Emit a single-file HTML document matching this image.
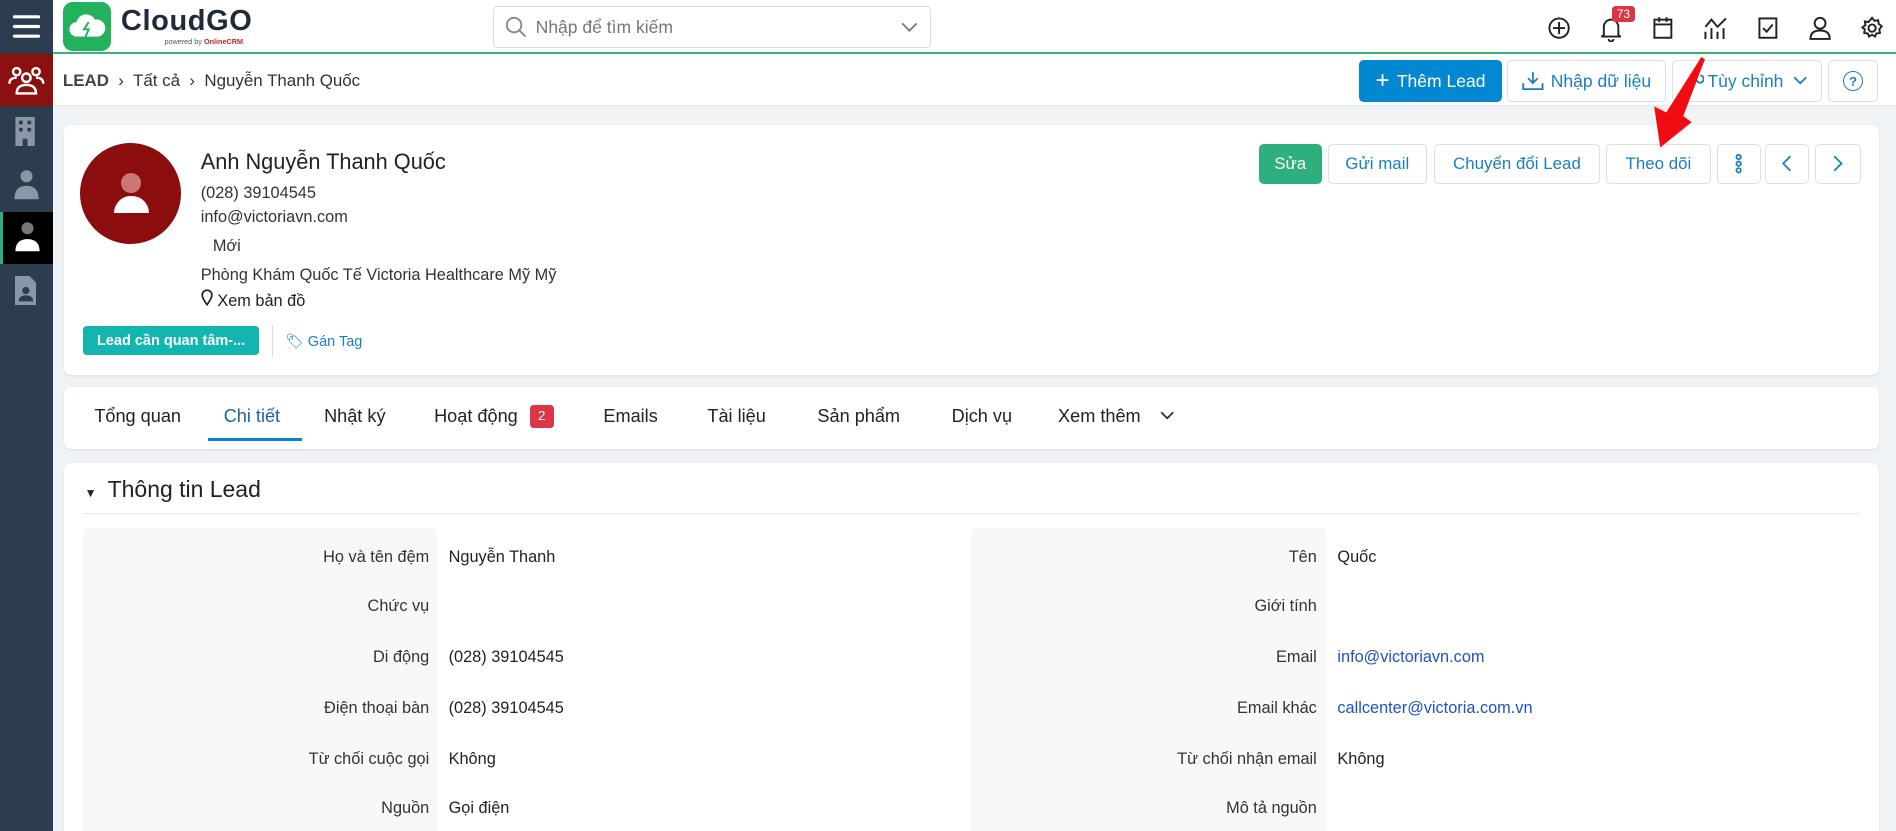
<!DOCTYPE html>
<html><head><meta charset="utf-8"><style>
html{zoom:1.2092;overflow:hidden;background:#f0f3f6}
*{box-sizing:border-box;margin:0;padding:0}
body{width:1568px;height:687px;overflow:hidden;background:#f0f3f6;font-family:"Liberation Sans","Noto Sans CJK SC",sans-serif;color:#222;font-size:13.5px;position:relative}
.abs{position:absolute}
.side{left:0;top:0;width:44px;height:687px;background:#2c3d4f}
.top{left:44px;top:0;width:1524px;height:45px;background:#fff;border-bottom:2px solid #3cb371}
.bc{left:44px;top:45px;width:1524px;height:43px;background:#fff;border-bottom:1px solid #e3e6ea}
.btn{position:absolute;border:1px solid #dcdfe4;border-radius:4px;background:#fff;color:#1a7fc1;font-size:14px;display:flex;align-items:center;justify-content:center;white-space:nowrap}
.card{position:absolute;background:#fff;border-radius:6px;box-shadow:0 1px 2px rgba(0,0,0,.08)}
.tab{position:absolute;top:336px;font-size:15px;color:#222}
.lab{position:absolute;text-align:right;color:#333;font-size:13.5px}
.val{position:absolute;font-size:13.5px;color:#222}
.ic{position:absolute;top:13px}
</style></head><body>
<div class="abs side"></div>
<svg class="abs" style="left:10px;top:10px" width="24" height="24" viewBox="0 0 24 24" stroke="#fff" stroke-width="2.6" stroke-linecap="round"><path d="M2 4h20M2 12h20M2 20h20"/></svg>
<div class="abs" style="left:0;top:45px;width:44px;height:43px;background:#8b1010"></div>
<svg class="abs" style="left:6px;top:51px" width="32" height="32" viewBox="0 0 32 32" fill="none" stroke="#fff" stroke-width="2"><circle cx="8" cy="8" r="3"/><circle cx="24" cy="8" r="3"/><circle cx="16" cy="13" r="3.5"/><path d="M2 18c0-4 3-5 6-5M30 18c0-4-3-5-6-5M8 26c0-5 3-7 8-7s8 2 8 7z"/></svg>
<svg class="abs" style="left:11px;top:97px" width="20" height="24" viewBox="0 0 20 24" fill="#8a97a5"><rect x="2" y="0" width="16" height="24"/><g fill="#2c3d4f"><rect x="5" y="3" width="3" height="3"/><rect x="12" y="3" width="3" height="3"/><rect x="5" y="9" width="3" height="3"/><rect x="12" y="9" width="3" height="3"/><rect x="8" y="18" width="4" height="6"/></g></svg>
<svg class="abs" style="left:10px;top:140px" width="24" height="26" viewBox="0 0 24 26" fill="#8a97a5"><circle cx="12" cy="6" r="5"/><path d="M2 25c0-8 4-11 10-11s10 3 10 11z"/></svg>
<div class="abs" style="left:0;top:175px;width:44px;height:43px;background:#000;border-left:3px solid #2eaf7d"></div>
<svg class="abs" style="left:11px;top:183px" width="24" height="26" viewBox="0 0 24 26"><circle cx="12" cy="6" r="5" fill="#777"/><path d="M2 25c0-7 4-10 10-10s10 3 10 10z" fill="#fff"/></svg>
<svg class="abs" style="left:12px;top:228px" width="18" height="24" viewBox="0 0 18 24" fill="#8a97a5"><path d="M0 0h12l6 6v18H0z"/><circle cx="9" cy="12" r="3" fill="#2c3d4f"/><path d="M3 21c0-4 3-5 6-5s6 1 6 5z" fill="#2c3d4f"/></svg>

<div class="abs top"></div>
<div class="abs" style="left:52px;top:2px;width:40px;height:40px;background:#22b15c;border-radius:8px"></div>
<svg class="abs" style="left:55px;top:8px" width="34" height="28" viewBox="0 0 34 28"><path d="M8 22a6 6 0 0 1 0-12 8 8 0 0 1 15-2 6 6 0 0 1 3 14z" fill="#fff"/><path d="M18 10l-4 6h4l-3 7" stroke="#22b15c" stroke-width="1.6" fill="none"/></svg>
<div class="abs" style="left:100px;top:4px;font-size:24px;font-weight:bold;color:#1f2a3a;letter-spacing:.5px">CloudGO</div>
<div class="abs" style="left:136px;top:31px;font-size:6px;color:#555">powered by <b style="color:#c0262d">OnlineCRM</b></div>
<div class="abs" style="left:408px;top:5px;width:362px;height:35px;border:1px solid #d8dce1;border-radius:4px"></div>
<svg class="abs" style="left:418px;top:13px" width="18" height="18" viewBox="0 0 18 18" fill="none" stroke="#888" stroke-width="1.5"><circle cx="7.5" cy="7.5" r="6"/><path d="M12 12l5 5"/></svg>
<div class="abs" style="left:443px;top:14px;font-size:14.5px;color:#777">Nhập để tìm kiếm</div>
<svg class="abs" style="left:745px;top:17px" width="14" height="10" viewBox="0 0 14 10" fill="none" stroke="#777" stroke-width="1.5"><path d="M1 2l6 6 6-6"/></svg>
<svg class="ic" style="left:1279px" width="20" height="20" viewBox="0 0 20 20" fill="none" stroke="#222" stroke-width="1.6"><circle cx="10" cy="10" r="8"/><path d="M10 5v10M5 10h10"/></svg>
<svg class="ic" style="left:1322px" width="20" height="22" viewBox="0 0 20 22" fill="none" stroke="#222" stroke-width="1.6"><path d="M4 16V9a6 6 0 0 1 12 0v7l2 1H2zM8 19a2 2 0 0 0 4 0"/></svg>
<div class="abs" style="left:1333px;top:5px;background:#dc3545;color:#fff;font-size:10px;padding:1px 4px;border-radius:3px">73</div>
<svg class="ic" style="left:1366px" width="18" height="20" viewBox="0 0 18 20" fill="none" stroke="#222" stroke-width="1.6"><rect x="2" y="3" width="14" height="15"/><path d="M2 7h14M6 1v4M12 1v4"/></svg>
<svg class="ic" style="left:1408px" width="22" height="20" viewBox="0 0 22 20" fill="none" stroke="#222" stroke-width="1.6"><path d="M2 19v-6M7 19v-9M12 19v-6M17 19v-9M2 9l5-6 5 6 7-7"/></svg>
<svg class="ic" style="left:1453px" width="18" height="20" viewBox="0 0 18 20" fill="none" stroke="#222" stroke-width="1.6"><rect x="2" y="2" width="14" height="16"/><path d="M5 10l3 3 5-6"/></svg>
<svg class="ic" style="left:1495px" width="20" height="20" viewBox="0 0 20 20" fill="none" stroke="#222" stroke-width="1.6"><circle cx="10" cy="6" r="4.5"/><path d="M2 19c0-5 3-7 8-7s8 2 8 7z"/></svg>
<svg class="ic" style="left:1538px" width="20" height="20" viewBox="0 0 20 20" fill="none" stroke="#222" stroke-width="1.6"><circle cx="10" cy="10" r="3"/><path d="M10 1.5l2 2.5 3-.5.5 3 2.5 2-2 2.5.5 3-3 .5-1 2.5-2.5-1.5-2.5 1.5-1-2.5-3-.5.5-3L2 9.5 4.5 7.5 4 4.5l3 .5z"/></svg>

<div class="abs bc"></div>
<div class="abs" style="left:52px;top:59px;font-size:14px;color:#333"><span style="font-weight:bold;color:#3d4550">LEAD</span> &nbsp;›&nbsp; Tất cả &nbsp;›&nbsp; Nguyễn Thanh Quốc</div>
<div class="btn" style="left:1124px;top:50px;width:118px;height:34px;background:#0288d1;border-color:#0288d1;color:#fff;font-size:14.5px"><span style="font-size:20px;margin-right:6px">+</span>Thêm Lead</div>
<div class="btn" style="left:1246px;top:50px;width:132px;height:34px;font-size:14.5px"><svg width="18" height="16" viewBox="0 0 18 16" fill="none" stroke="#1a7fc1" stroke-width="1.5" style="margin-right:6px"><path d="M9 1v9M5 6l4 4 4-4M1 10v5h16v-5"/></svg>Nhập dữ liệu</div>
<div class="btn" style="left:1383px;top:50px;width:124px;height:34px;font-size:14.5px"><svg width="14" height="14" viewBox="0 0 14 14" fill="none" stroke="#1a7fc1" stroke-width="1.6" style="margin-right:3px"><path d="M2 12l6-6M8 6a3 3 0 1 0 3-4"/></svg>Tùy chỉnh<svg width="12" height="8" viewBox="0 0 12 8" fill="none" stroke="#1a7fc1" stroke-width="1.5" style="margin-left:8px"><path d="M1 1l5 5 5-5"/></svg></div>
<div class="btn" style="left:1512px;top:50px;width:41px;height:34px"><span style="border:1.6px solid #1a7fc1;border-radius:50%;width:17px;height:17px;font-size:11px;display:flex;align-items:center;justify-content:center;font-weight:bold">?</span></div>

<div class="card" style="left:53px;top:103px;width:1501px;height:207px"></div>
<div class="abs" style="left:66px;top:118px;width:84px;height:84px;border-radius:50%;background:#8b0d0d"></div>
<div class="abs" style="left:100px;top:143px;width:17px;height:17px;border-radius:50%;background:#c77"></div>
<div class="abs" style="left:94px;top:162px;width:29px;height:14px;border-radius:14px 14px 0 0;background:#fff"></div>
<div class="abs" style="left:166px;top:123px;font-size:18px;color:#222">Anh Nguyễn Thanh Quốc</div>
<div class="abs" style="left:166px;top:152px;color:#333">(028) 39104545</div>
<div class="abs" style="left:166px;top:172px;color:#333">info@victoriavn.com</div>
<div class="abs" style="left:176px;top:196px;color:#333">Mới</div>
<div class="abs" style="left:166px;top:220px;color:#333">Phòng Khám Quốc Tế Victoria Healthcare Mỹ Mỹ</div>
<div class="abs" style="left:166px;top:239px;color:#222"><svg width="10" height="14" viewBox="0 0 10 14" fill="none" stroke="#222" stroke-width="1.4"><path d="M5 13C2 9 1 7 1 5a4 4 0 0 1 8 0c0 2-1 4-4 8z"/></svg> Xem bản đồ</div>
<div class="abs" style="left:69px;top:270px;width:145px;height:24px;background:#13b5b1;border-radius:3px;color:#fff;font-size:12px;font-weight:bold;display:flex;align-items:center;justify-content:center">Lead cần quan tâm-...</div>
<div class="abs" style="left:225px;top:269px;width:1px;height:26px;background:#ddd"></div>
<div class="abs" style="left:236px;top:275px;font-size:12px;color:#1a7fc1">🏷 Gán Tag</div>
<div class="btn" style="left:1041px;top:119px;width:52px;height:33px;background:#2eaf7d;border-color:#2eaf7d;color:#fff">Sửa</div>
<div class="btn" style="left:1098px;top:119px;width:82px;height:33px">Gửi mail</div>
<div class="btn" style="left:1186px;top:119px;width:137px;height:33px">Chuyển đổi Lead</div>
<div class="btn" style="left:1328px;top:119px;width:87px;height:33px">Theo dõi</div>
<div class="btn" style="left:1420px;top:119px;width:36px;height:33px"><svg width="6" height="16" viewBox="0 0 6 16" fill="none" stroke="#1a7fc1" stroke-width="1.5"><circle cx="3" cy="2.5" r="1.8"/><circle cx="3" cy="8" r="1.8"/><circle cx="3" cy="13.5" r="1.8"/></svg></div>
<div class="btn" style="left:1460px;top:119px;width:36px;height:33px"><svg width="8" height="14" viewBox="0 0 8 14" fill="none" stroke="#1a7fc1" stroke-width="1.5"><path d="M7 1L1 7l6 6"/></svg></div>
<div class="btn" style="left:1501px;top:119px;width:38px;height:33px"><svg width="8" height="14" viewBox="0 0 8 14" fill="none" stroke="#1a7fc1" stroke-width="1.5"><path d="M1 1l6 6-6 6"/></svg></div>
<svg class="abs" style="left:0;top:0" width="1568" height="200"><path d="M1407 47L1410 49 1392 96 1399 101 1373 122 1368 88 1378 93z" fill="#f00c12"/></svg>

<div class="card" style="left:53px;top:320px;width:1501px;height:51px"></div>
<div class="tab" style="left:78px">Tổng quan</div>
<div class="tab" style="left:185px;color:#1565a8">Chi tiết</div>
<div class="abs" style="left:172px;top:362px;width:78px;height:3px;background:#0288d1"></div>
<div class="tab" style="left:268px">Nhật ký</div>
<div class="tab" style="left:359px">Hoạt động</div>
<div class="abs" style="left:438px;top:335px;width:20px;height:19px;background:#dc3545;border-radius:3px;color:#fff;font-size:11px;text-align:center;line-height:19px">2</div>
<div class="tab" style="left:499px">Emails</div>
<div class="tab" style="left:585px">Tài liệu</div>
<div class="tab" style="left:676px">Sản phẩm</div>
<div class="tab" style="left:787px">Dịch vụ</div>
<div class="tab" style="left:875px">Xem thêm</div>
<svg class="abs" style="left:959px;top:340px" width="12" height="8" viewBox="0 0 12 8" fill="none" stroke="#333" stroke-width="1.5"><path d="M1 1l5 5 5-5"/></svg>

<div class="card" style="left:53px;top:383px;width:1501px;height:304px;border-radius:6px 6px 0 0"></div>
<div class="abs" style="left:70px;top:402px;font-size:10px">▼</div>
<div class="abs" style="left:89px;top:394px;font-size:19px;color:#222">Thông tin Lead</div>
<div class="abs" style="left:69px;top:424px;width:1469px;height:1px;background:#e6e8eb"></div>
<div class="abs" style="left:69px;top:437px;width:292px;height:250px;background:#f7f8fa;border-radius:4px 4px 0 0"></div>
<div class="abs" style="left:803px;top:437px;width:294px;height:250px;background:#f7f8fa;border-radius:4px 4px 0 0"></div>

<div class="lab" style="left:69px;width:286px;top:453px">Họ và tên đệm</div><div class="val" style="left:371px;top:453px">Nguyễn Thanh</div>
<div class="lab" style="left:69px;width:286px;top:494px">Chức vụ</div>
<div class="lab" style="left:69px;width:286px;top:536px">Di động</div><div class="val" style="left:371px;top:536px">(028) 39104545</div>
<div class="lab" style="left:69px;width:286px;top:578px">Điện thoại bàn</div><div class="val" style="left:371px;top:578px">(028) 39104545</div>
<div class="lab" style="left:69px;width:286px;top:620px">Từ chối cuộc gọi</div><div class="val" style="left:371px;top:620px">Không</div>
<div class="lab" style="left:69px;width:286px;top:661px">Nguồn</div><div class="val" style="left:371px;top:661px">Gọi điện</div>

<div class="lab" style="left:803px;width:286px;top:453px">Tên</div><div class="val" style="left:1106px;top:453px">Quốc</div>
<div class="lab" style="left:803px;width:286px;top:494px">Giới tính</div>
<div class="lab" style="left:803px;width:286px;top:536px">Email</div><div class="val" style="left:1106px;top:536px;color:#1f52c9">info@victoriavn.com</div>
<div class="lab" style="left:803px;width:286px;top:578px">Email khác</div><div class="val" style="left:1106px;top:578px;color:#1f52c9">callcenter@victoria.com.vn</div>
<div class="lab" style="left:803px;width:286px;top:620px">Từ chối nhận email</div><div class="val" style="left:1106px;top:620px">Không</div>
<div class="lab" style="left:803px;width:286px;top:661px">Mô tả nguồn</div>
</body></html>
